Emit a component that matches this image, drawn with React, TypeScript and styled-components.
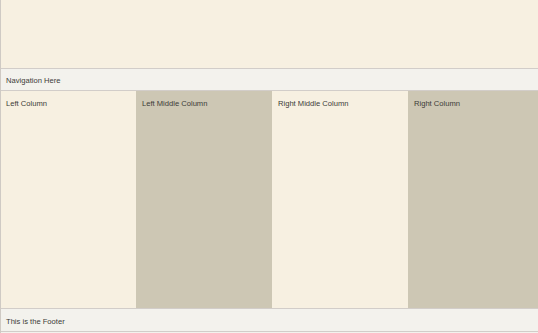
import React from "react";
import styled, { createGlobalStyle } from "styled-components";

const GlobalStyle = createGlobalStyle`
  html, body {
    margin: 0;
    padding: 0;
    background: #f3f2ed;
  }
  body {
    font-family: "Liberation Sans", Arial, sans-serif;
  }
`;

const Page = styled.div`
  width: 538px;
  height: 333px;
  overflow: hidden;
  border-left: 1px solid #cfcac4;
  box-sizing: border-box;
  display: flex;
  flex-direction: column;
  background: #f3f2ed;
`;

const Header = styled.div`
  height: 68px;
  flex-shrink: 0;
  background: #f7f0e1;
  border-bottom: 1px solid #d2cdc9;
`;

const Bar = styled.div<{ $tall?: boolean }>`
  height: ${(p) => (p.$tall ? 23 : 22)}px;
  box-sizing: border-box;
  display: flex;
  align-items: center;
  padding: 2px 0 0 5px;
  background: #f3f2ed;
  border-bottom: 1px solid #d2cdc9;
  font-size: 7.6px;
  color: #3c3c38;
  flex-shrink: 0;
`;

const Columns = styled.div`
  height: 217px;
  flex-shrink: 0;
  display: grid;
  grid-template-columns: 135px 136px 136px 1fr;
  border-bottom: 1px solid #d2cdc9;
`;

const Column = styled.div<{ $dark?: boolean; $first?: boolean }>`
  background: ${(p) => (p.$dark ? "#cdc7b4" : "#f7f0e1")};
  padding: 8px 0 0 ${(p) => (p.$first ? 5 : 6)}px;
  font-size: 7.6px;
  line-height: 9px;
  color: #3c3c38;
`;

export default function App() {
  return (
    <>
      <GlobalStyle />
      <Page>
        <Header />
        <Bar>Navigation Here</Bar>
        <Columns>
          <Column $first>Left Column</Column>
          <Column $dark>Left Middle Column</Column>
          <Column>Right Middle Column</Column>
          <Column $dark>Right Column</Column>
        </Columns>
        <Bar $tall>This is the Footer</Bar>
      </Page>
    </>
  );
}
